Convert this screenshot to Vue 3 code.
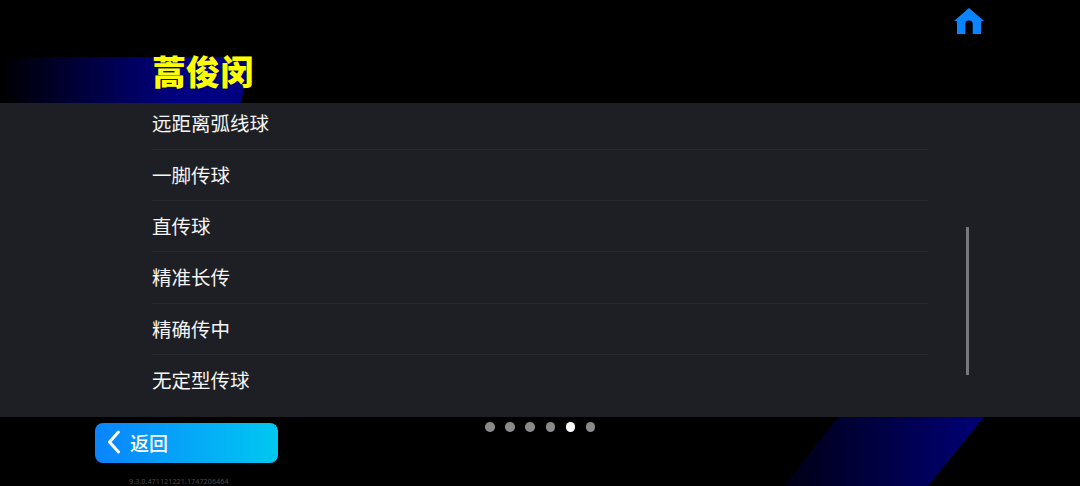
<template>
  <div class="screen">
    <div class="glow-top"></div>
    <div class="glow-bottom"></div>

    <header class="head">
      <div class="home-row">
        <svg class="home" viewBox="0 0 30 26">
          <path fill-rule="evenodd" d="M15 0 L30 13 L27 13 L27 26 L18.7 26 L18.7 16 Q18.7 12.6 15 12.6 Q11.3 12.6 11.3 16 L11.3 26 L3 26 L3 13 L0 13 Z" />
        </svg>
      </div>
      <h1 class="title">蒿俊闵</h1>
    </header>

    <div class="panel">
      <ul class="list">
        <li v-for="item in items" :key="item" class="row">{{ item }}</li>
      </ul>
      <div class="scrollbar"></div>
    </div>

    <footer class="foot">
      <div class="left">
        <button class="back">
          <svg class="chevron" viewBox="0 0 14 24">
            <path d="M11.5 2 L2.5 12 L11.5 22" />
          </svg>
          <span>返回</span>
        </button>
        <div class="version">9.3.0.471121221.1747206464</div>
      </div>
      <div class="dots">
        <span v-for="n in 6" :key="n" class="dot" :class="{ on: n === 5 }"></span>
      </div>
    </footer>
  </div>
</template>

<script setup>
const items = ['远距离弧线球', '一脚传球', '直传球', '精准长传', '精确传中', '无定型传球']
</script>

<style>
html, body {
  margin: 0;
  background: #000;
}
</style>

<style scoped>
.screen {
  position: relative;
  width: 1080px;
  height: 486px;
  overflow: hidden;
  background: #000;
  font-family: "Noto Sans CJK SC", "Noto Sans", sans-serif;
}

.glow-top {
  position: absolute;
  left: 0;
  top: 57px;
  width: 252px;
  height: 46px;
  background: linear-gradient(90deg, #000 0%, #000080 70%);
  clip-path: polygon(0 0, 100% 0, 95.5% 100%, 0 100%);
}

.glow-bottom {
  position: absolute;
  left: 784px;
  top: 417px;
  width: 200px;
  height: 69px;
  background: linear-gradient(90deg, #000014 0%, #000078 100%);
  clip-path: polygon(27% 0, 100% 0, 72% 100%, 0 100%);
}

.head {
  position: relative;
  height: 103px;
  box-sizing: border-box;
  padding-top: 8px;
}

.home-row {
  display: flex;
  justify-content: flex-end;
  padding-right: 96px;
  height: 27px;
}

.home {
  width: 30px;
  height: 26px;
  fill: #0a84ff;
}

.title {
  margin: 13px 0 0 152px;
  font-size: 34px;
  line-height: 46px;
  font-weight: 900;
  color: #ffff00;
}

.panel {
  position: relative;
  height: 314px;
  overflow: hidden;
  background: #1e1f24;
}

.list {
  list-style: none;
  margin: -4.6px 0 0 152px;
  padding: 0;
  width: 776px;
}

.row {
  height: 51.33px;
  box-sizing: border-box;
  border-bottom: 1px solid #2a2b30;
  font-size: 19.5px;
  line-height: 50.5px;
  color: #f5f5f5;
}

.row:last-child {
  border-bottom: none;
}

.scrollbar {
  position: absolute;
  left: 966px;
  top: 124px;
  width: 3px;
  height: 148px;
  background: #77787c;
}

.foot {
  position: relative;
  display: flex;
  align-items: flex-start;
}

.left {
  margin-left: 95px;
  padding-top: 6px;
}

.back {
  display: flex;
  align-items: center;
  width: 183px;
  height: 40px;
  padding: 0 0 2px 12px;
  border: none;
  border-radius: 8px;
  background: linear-gradient(90deg, #0a84ff 0%, #00c8f0 100%);
  color: #fff;
  font-family: inherit;
  font-size: 19px;
  font-weight: 500;
}

.chevron {
  width: 14px;
  height: 24px;
  margin-right: 9px;
  fill: none;
  stroke: #fff;
  stroke-width: 3;
  stroke-linecap: round;
  stroke-linejoin: round;
}

.version {
  margin: 12px 0 0 34px;
  font-family: "Noto Sans", sans-serif;
  font-size: 7.3px;
  line-height: 12px;
  color: #4a4a4a;
  white-space: nowrap;
}

.dots {
  display: flex;
  gap: 10.7px;
  margin: 5.3px 0 0 207px;
}

.dot {
  width: 9.5px;
  height: 9.5px;
  border-radius: 50%;
  background: #8a8a8a;
}

.dot.on {
  background: #fff;
}
</style>
